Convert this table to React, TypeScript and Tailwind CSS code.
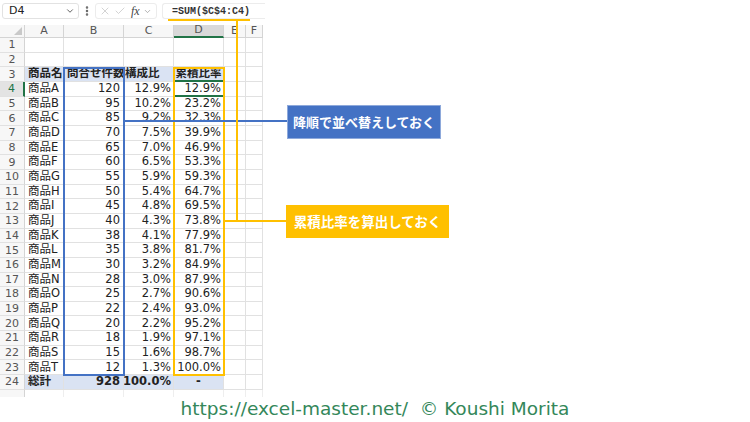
import { Check, ChevronDown, EllipsisVertical, X } from "lucide-react";

const cols = ["A", "B", "C", "D", "E", "F"];
const widths = ["w-[39px]", "w-[60px]", "w-[50px]", "w-[50px]", "w-[22px]", "w-[17px]"];

const data: [string, string, string, string][] = [
  ["商品A", "120", "12.9%", "12.9%"],
  ["商品B", "95", "10.2%", "23.2%"],
  ["商品C", "85", "9.2%", "32.3%"],
  ["商品D", "70", "7.5%", "39.9%"],
  ["商品E", "65", "7.0%", "46.9%"],
  ["商品F", "60", "6.5%", "53.3%"],
  ["商品G", "55", "5.9%", "59.3%"],
  ["商品H", "50", "5.4%", "64.7%"],
  ["商品I", "45", "4.8%", "69.5%"],
  ["商品J", "40", "4.3%", "73.8%"],
  ["商品K", "38", "4.1%", "77.9%"],
  ["商品L", "35", "3.8%", "81.7%"],
  ["商品M", "30", "3.2%", "84.9%"],
  ["商品N", "28", "3.0%", "87.9%"],
  ["商品O", "25", "2.7%", "90.6%"],
  ["商品P", "22", "2.4%", "93.0%"],
  ["商品Q", "20", "2.2%", "95.2%"],
  ["商品R", "18", "1.9%", "97.1%"],
  ["商品S", "15", "1.6%", "98.7%"],
  ["商品T", "12", "1.3%", "100.0%"],
];

const cell = "h-full shrink-0 border-r border-b border-[#e1e1e1] flex items-center overflow-hidden whitespace-nowrap";

function RowHead({ n, active }: { n?: number; active?: boolean }) {
  return (
    <div
      className={`w-[25px] h-full shrink-0 border-b border-[#e1e1e1] flex items-center justify-center text-[11px] ${
        active ? "bg-[#e3e3e3] text-[#217346] border-r-2 border-r-[#217346]" : "bg-[#f7f7f7] text-[#555] border-r border-r-[#d4d4d4]"
      }`}
    >
      {n}
    </div>
  );
}

function Row({ n, vals, kind }: { n: number; vals?: string[]; kind?: "head" | "total" }) {
  const fill = kind ? "bg-[#dae3f3] font-bold" : "";
  const v = vals ?? ["", "", "", ""];
  return (
    <div className="flex h-[14.67px] text-[11.5px] leading-none">
      <RowHead n={n} active={n === 4} />
      <div className={`${cell} ${widths[0]} ${fill} pl-[3px]`}>{v[0]}</div>
      <div className={`${cell} ${widths[1]} ${fill} ${kind === "head" ? "pl-[3px]" : "justify-end pr-[3px]"}`}>{v[1]}</div>
      <div className={`${cell} ${widths[2]} ${fill} ${kind === "head" ? "pl-[1px]" : "justify-end pr-[2px]"}`}>{v[2]}</div>
      <div
        className={`${cell} ${widths[3]} ${fill} ${kind ? "justify-center" : "justify-end pr-[2px]"} ${
          n === 3 || n === 4 ? "border-b-2 border-b-[#217346]" : ""
        }`}
      >
        {v[3]}
      </div>
      <div className={`${cell} ${widths[4]}`} />
      <div className={`${cell} ${widths[5]}`} />
    </div>
  );
}

function Sheet() {
  return (
    <div className="w-[265px] text-[#222]" style={{ fontFamily: '"DejaVu Sans", "Noto Sans CJK JP", sans-serif' }}>
      {/* formula bar */}
      <div className="h-[25px] flex items-start pt-[3px] gap-[2px]">
        <div className="ml-[2px] w-[77px] h-[16px] rounded-[3px] border border-[#e2e2e2] flex items-center justify-between pl-[6px] pr-[3px] text-[11px]">
          <span>D4</span>
          <ChevronDown className="w-[10px] h-[10px] text-[#555]" strokeWidth={2.2} />
        </div>
        <EllipsisVertical className="w-[12px] h-[14px] mt-[1px] text-[#666]" strokeWidth={3} />
        <div className="w-[62px] h-[16px] rounded-[3px] border border-[#ececec] flex items-center gap-[3px] pl-[3px] text-[#c4c4c4]">
          <X className="w-[12px] h-[12px]" strokeWidth={1.5} />
          <Check className="w-[12px] h-[12px]" strokeWidth={1.5} />
          <span className="text-[12px] italic text-[#444] ml-[2px]" style={{ fontFamily: '"Liberation Serif", serif' }}>
            fx
          </span>
          <ChevronDown className="w-[9px] h-[9px] text-[#999]" />
        </div>
        <div
          className="flex-1 h-[16px] ml-[3px] rounded-l-[3px] border border-r-0 border-[#ececec] flex items-center pl-[9px] text-[10px] font-bold text-[#333]"
          style={{ fontFamily: '"Liberation Mono", monospace' }}
        >
          =SUM($C$4:C4)
        </div>
      </div>

      {/* column headers */}
      <div className="flex h-[13px] text-[11px] text-[#555]">
        <div className="w-[25px] h-full shrink-0 bg-[#f7f7f7] border-r border-b border-[#d4d4d4] flex items-end justify-end pr-[2px] pb-[2px]">
          <svg width="8" height="8" viewBox="0 0 8 8">
            <path d="M8 0 L8 8 L0 8 Z" fill="#c9c9c9" />
          </svg>
        </div>
        {cols.map((c, i) => (
          <div
            key={c}
            className={`${widths[i]} h-full shrink-0 flex items-center justify-center border-r ${
              c === "D" ? "bg-[#d9d9d9] border-b-2 border-b-[#217346] border-r-[#d4d4d4]" : "bg-[#f7f7f7] border-b border-[#d4d4d4]"
            }`}
          >
            {c}
          </div>
        ))}
      </div>

      <Row n={1} />
      <Row n={2} />
      <Row n={3} kind="head" vals={["商品名", "問合せ件数", "構成比", "累積比率"]} />
      {data.map((d, i) => (
        <Row key={d[0]} n={i + 4} vals={d} />
      ))}
      <Row n={24} kind="total" vals={["総計", "928", "100.0%", "-"]} />
      <div className="flex h-[7px]">
        <div className="w-[25px] shrink-0 bg-[#f7f7f7] border-r border-[#d4d4d4]" />
        {widths.map((w) => (
          <div key={w} className={`${w} shrink-0 border-r border-[#eeeeee]`} />
        ))}
      </div>
    </div>
  );
}

export default function App() {
  return (
    <div className="relative w-[750px] h-[422px] bg-white overflow-hidden">
      <Sheet />

      {/* footer credit */}
      <div
        className="h-[24px] flex items-center justify-center text-[18.5px] text-[#34875a] whitespace-pre"
        style={{ fontFamily: '"DejaVu Sans", sans-serif' }}
      >
        {"https://excel-master.net/  © Koushi Morita"}
      </div>

      {/* annotation overlays */}
      <div className="absolute left-[63px] top-[67px] w-[62px] h-[309px] border-2 border-[#4472c4]" />
      <div className="absolute left-[173px] top-[67px] w-[52px] h-[309px] border-2 border-[#ffc000]" />
      <div className="absolute left-[125px] top-[120px] w-[162px] h-[2px] bg-[#4472c4]" />
      <div className="absolute left-[168px] top-[19px] w-[82px] h-[2px] bg-[#ffc000]" />
      <div className="absolute left-[236px] top-[19px] w-[2px] h-[203px] bg-[#ffc000]" />
      <div className="absolute left-[225px] top-[220px] w-[62px] h-[2px] bg-[#ffc000]" />

      <div
        className="absolute left-[287px] top-[105px] w-[154px] h-[34px] bg-[#4472c4] border border-[#8ea9db] flex items-center justify-center text-white font-bold text-[13px]"
        style={{ fontFamily: '"Noto Sans CJK JP", sans-serif' }}
      >
        降順で並べ替えしておく
      </div>
      <div
        className="absolute left-[286px] top-[205px] w-[163px] h-[33px] bg-[#ffc000] flex items-center justify-center text-white font-bold text-[13.5px]"
        style={{ fontFamily: '"Noto Sans CJK JP", sans-serif' }}
      >
        累積比率を算出しておく
      </div>
    </div>
  );
}
